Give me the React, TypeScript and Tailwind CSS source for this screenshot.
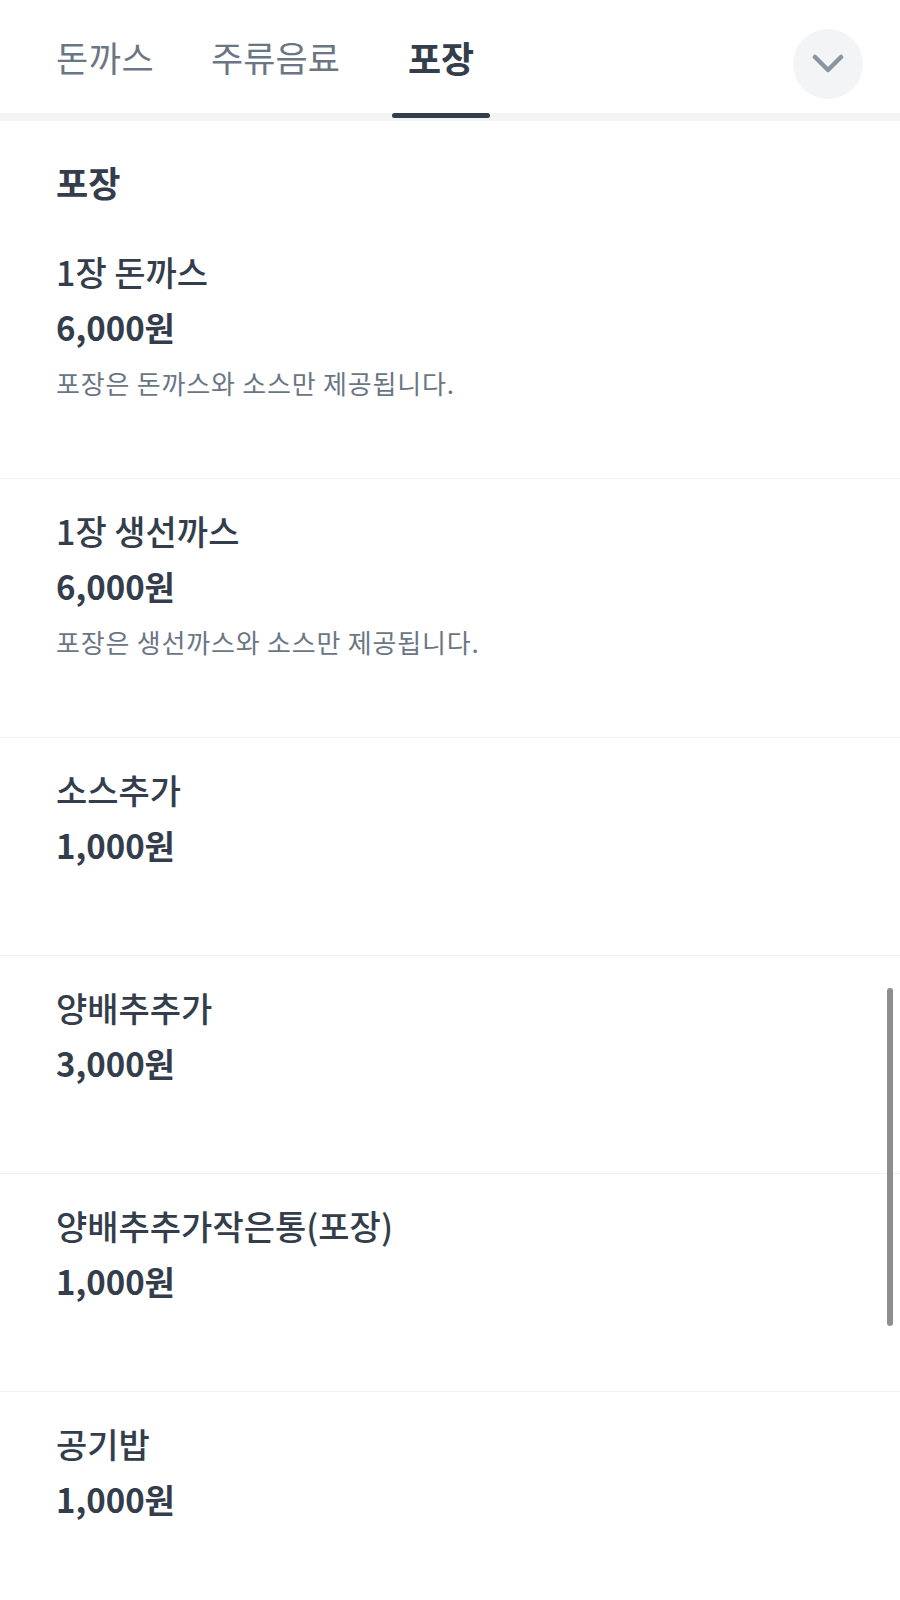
import React from 'react';

// --- Data ---

interface MenuItem {
  name: string;
  price: string;
  desc?: string;
}

const items: MenuItem[] = [
  { name: '1장 돈까스', price: '6,000원', desc: '포장은 돈까스와 소스만 제공됩니다.' },
  { name: '1장 생선까스', price: '6,000원', desc: '포장은 생선까스와 소스만 제공됩니다.' },
  { name: '소스추가', price: '1,000원' },
  { name: '양배추추가', price: '3,000원' },
  { name: '양배추추가작은통(포장)', price: '1,000원' },
  { name: '공기밥', price: '1,000원' },
];

const font = { fontFamily: '"Noto Sans CJK KR", "Noto Sans", sans-serif' };

const Tabs: React.FC = () => (
  <header className="relative h-[121px] border-b-[8px] border-[#f3f4f6] bg-white">
    <nav className="flex h-full items-center">
      <span className="ml-[56px] text-[35px] tracking-[0.5px] leading-[40px] text-[#6b7684]">돈까스</span>
      <span className="ml-[57px] text-[35px] leading-[40px] text-[#6b7684]">주류음료</span>
      <div className="relative ml-[52px] flex h-full items-center px-4">
        <span className="text-[36px] font-bold leading-[40px] text-[#333d4b]">포장</span>
        <div className="absolute -bottom-[5px] left-0 right-0 h-[5px] rounded-full bg-[#333d4b]" />
      </div>
    </nav>
    <button className="absolute right-[37px] top-[29px] flex h-[70px] w-[70px] items-center justify-center rounded-full bg-[#f2f4f6]">
      <svg width="32" height="20" viewBox="0 0 32 20" fill="none">
        <path d="M3 3l13 13L29 3" stroke="#8b95a1" strokeWidth="4.5" strokeLinecap="round" strokeLinejoin="round" />
      </svg>
    </button>
  </header>
);

const Row: React.FC<{ item: MenuItem; first?: boolean; last?: boolean }> = ({ item, first, last }) => (
  <div
    className={`px-[56px] ${first ? 'pt-[50px]' : 'pt-[32px] border-t border-[#f0f1f3]'} ${
      item.desc ? 'pb-[79px]' : last ? 'pb-[80px]' : 'pb-[90px]'
    }`}
  >
    <div className="text-[34px] font-medium leading-[40px] text-[#333d4b]">{item.name}</div>
    <div className="mt-[15px] text-[33px] font-bold leading-[40px] text-[#333d4b]">{item.price}</div>
    {item.desc && (
      <div className="mt-5 text-[26px] leading-[32px] tracking-[0.8px] text-[#6b7684]">{item.desc}</div>
    )}
  </div>
);

export default function App() {
  return (
    <div className="relative min-h-[1600px] overflow-hidden bg-white" style={font}>
      <Tabs />
      <main>
        <h2 className="px-[56px] pt-[41px] text-[35px] font-bold leading-[40px] text-[#333d4b]">포장</h2>
        {items.map((it, i) => (
          <Row key={it.name} item={it} first={i === 0} last={i === items.length - 1} />
        ))}
      </main>
      {/* overlay scrollbar */}
      <div className="absolute right-[7px] top-[988px] h-[338px] w-[6px] rounded-full bg-[#8e8e8e]" />
    </div>
  );
}
